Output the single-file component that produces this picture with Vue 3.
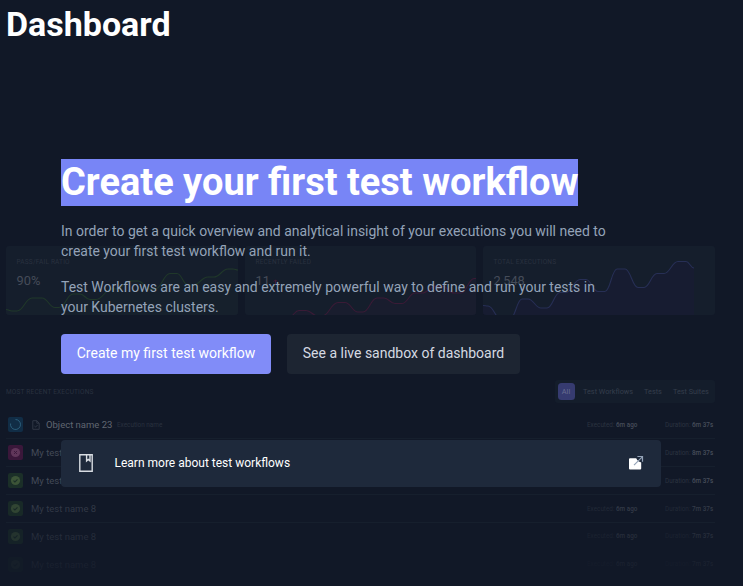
<script setup>
// Smooth curve with horizontal tangents at each point
function curve(points) {
  let d = `M${points[0][0]} ${points[0][1]}`
  for (let i = 1; i < points.length; i++) {
    const [x0, y0] = points[i - 1]
    const [x1, y1] = points[i]
    const k = (x1 - x0) * 0.44
    d += `C${x0 + k} ${y0} ${x1 - k} ${y1} ${x1} ${y1}`
  }
  return d
}
function area(points) {
  return `${curve(points)}V80H${points[0][0]}Z`
}

const cards = [
  {
    title: 'PASS/FAIL RATIO', value: '90%', tone: 'green',
    points: [[0, 63.5], [6, 65], [11, 65], [26, 52], [36, 52], [49, 61.5], [53, 61.5], [67, 48], [74, 48], [84, 53.5], [90, 53.5], [106, 43], [111, 43], [124, 35], [132, 35], [144, 43], [149, 43], [164, 27.5], [171, 27.5], [182, 39], [187, 39], [202, 31], [208, 31], [222, 23], [227, 23], [232, 24]],
  },
  {
    title: 'RECENTLY FAILED', value: '11', tone: 'red', arrow: true,
    points: [[44, 71], [54, 64.5], [61, 64.5], [73, 70], [77, 70], [93, 56.5], [100, 56.5], [113, 66], [118, 66], [132, 52], [139, 52], [150, 57.5], [157, 57.5], [170, 47], [177, 47], [191, 40], [197, 40], [209, 47], [216, 47], [229, 32.5], [232, 32.5]],
  },
  {
    title: 'TOTAL EXECUTIONS', value: '2,548', tone: 'blue',
    points: [[0, 59.5], [5, 60], [18, 73], [27, 73], [39, 53], [45, 53], [58, 62], [64, 62], [77, 46.5], [83, 46.5], [97, 33.5], [103, 33.5], [115, 45.5], [122, 45.5], [134, 23], [142, 23], [155, 41.5], [161, 41.5], [174, 27.5], [181, 27.5], [195, 15.5], [203, 15.5], [211, 22]],
  },
]

const rows = [
  { status: 'running', name: 'Object name 23', note: 'Execution name', duration: '6m 37s' },
  { status: 'failed', name: 'My test name 8', duration: '8m 37s' },
  { status: 'passed', name: 'My test name 8', duration: '6m 37s' },
  { status: 'passed', name: 'My test name 8', duration: '7m 37s' },
  { status: 'passed', name: 'My test name 8', duration: '7m 37s' },
  { status: 'passed', name: 'My test name 8', duration: '7m 37s' },
]
const filters = ['All', 'Test Workflows', 'Tests', 'Test Suites']
</script>

<template>
  <main class="page">
    <h1 class="title">Dashboard</h1>

    <div class="stage">
      <div class="preview" aria-hidden="true">
        <div class="cards">
          <section v-for="card in cards" :key="card.title" class="card" :class="card.tone">
            <svg class="chart" viewBox="0 0 232 69" preserveAspectRatio="none">
              <path class="area" :d="area(card.points)" />
              <path class="line" :d="curve(card.points)" />
            </svg>
            <div class="card-text">
              <div class="label">{{ card.title }}</div>
              <div class="value">
                {{ card.value }}
                <svg v-if="card.arrow" class="up" viewBox="0 0 6 7"><path d="M3 7V1M.7 3.2 3 .9l2.3 2.3" /></svg>
              </div>
            </div>
          </section>
        </div>

        <div class="list-head">
          <span class="label">MOST RECENT EXECUTIONS</span>
          <div class="filters">
            <span v-for="(f, i) in filters" :key="f" class="filter" :class="{ active: i === 0 }">{{ f }}</span>
          </div>
        </div>

        <div class="rows">
          <div v-for="(row, i) in rows" :key="i" class="row" :class="`row-${i}`">
            <span class="status" :class="row.status">
              <svg v-if="row.status === 'running'" viewBox="0 0 15 15"><path class="ring" d="M7.5 2.5a5 5 0 1 1-4.9 4" /></svg>
              <svg v-else viewBox="0 0 15 15">
                <circle cx="7.5" cy="7.5" r="4.6" />
                <path v-if="row.status === 'failed'" d="m6 6 3 3m0-3L6 9" />
                <path v-else d="m5.5 7.6 1.4 1.3 2.6-2.6" />
              </svg>
            </span>
            <svg v-if="row.note" class="doc" viewBox="0 0 8 10">
              <path d="M.8.7h4l2.4 2.5v6.1H.8ZM4.8.7v2.5h2.4M2.4 6l1.1 1.1L5.6 5" />
            </svg>
            <span class="name">{{ row.name }}</span>
            <span v-if="row.note" class="note">{{ row.note }}</span>
            <span class="meta executed">Executed: <b>6m ago</b></span>
            <span class="meta duration">Duration: <b>{{ row.duration }}</b></span>
          </div>
        </div>
      </div>

      <section class="intro">
        <h2><span class="marked">Create your first test workflow</span></h2>
        <p>In order to get a quick overview and analytical insight of your executions you will need to<br />create your first test workflow and run it.</p>
        <p>Test Workflows are an easy and extremely powerful way to define and run your tests in<br />your Kubernetes clusters.</p>
        <div class="actions">
          <button class="btn primary">Create my first test workflow</button>
          <button class="btn secondary">See a live sandbox of dashboard</button>
        </div>
        <a class="learn">
          <svg class="book" viewBox="0 0 16 20">
            <path d="M1.8 1.8h12.4v16.4H1.8Z" />
            <path d="M8.6 2v5.9l1.7-1.4L12 7.9V2" />
          </svg>
          <span>Learn more about test workflows</span>
          <svg class="external" viewBox="0 0 16 16">
            <path class="sheet" d="M1 4.2q0-1 1-1h6.2l1 1.7 1.7 1.6 2.3 1v6q0 1-1 1H2q-1 0-1-1Z" />
            <path class="arrow" d="M6 10.2 14.3 1.9M9.4 1.5h5.1v5.3" />
          </svg>
        </a>
      </section>
    </div>
  </main>
</template>

<style>
body { background: #111827; }
</style>

<style scoped>
.page {
  box-sizing: border-box;
  width: 743px;
  height: 586px;
  overflow: hidden;
  background: #111827;
  color: #fff;
  font-family: Roboto, sans-serif;
}
.title {
  margin: 0;
  padding: 4px 0 0 6px;
  height: 155px;
  box-sizing: border-box;
  font-size: 34px;
  line-height: 41px;
  font-weight: 700;
}
.stage { display: grid; }
.preview, .intro { grid-area: 1 / 1; }
.preview { width: 709px; padding: 91px 0 0 6px; }
.cards { display: grid; grid-template-columns: 232px 231px 232px; column-gap: 7px; }
.card { display: grid; height: 69px; background: #151e2c; border-radius: 3px; overflow: hidden; }
.chart, .card-text { grid-area: 1 / 1; }
.chart { width: 232px; height: 69px; }
.line { fill: none; stroke-width: 1.1; }
.green .line { stroke: #20382a; }
.green .area { fill: #16202c; }
.red .line { stroke: #3a1b36; }
.red .area { fill: #191d2e; }
.blue .line { stroke: #272f55; }
.blue .area { fill: #171c31; }
.label { color: #29313f; font-size: 6.5px; line-height: 8px; letter-spacing: .19px; }
.card-text { padding: 12px 0 0 10.5px; }
.value { margin-top: 7px; color: #454c59; font-size: 12.8px; line-height: 15px; }
.up { width: 5px; height: 6px; fill: none; stroke: #4a1c3b; }
.list-head { display: flex; justify-content: space-between; align-items: center; margin-top: 65px; height: 23px; }
.filters { display: flex; align-items: center; box-sizing: border-box; width: 160px; height: 23px; padding-left: 2.5px; background: #141d2b; border-radius: 3px; color: #353d4b; font-size: 7.3px; }
.filter { flex: none; margin-right: 11px; white-space: nowrap; }
.filter.active { box-sizing: border-box; width: 17px; margin-right: 8.5px; line-height: 17px; text-align: center; border-radius: 3.5px; background: #363b70; color: #696e91; }
.rows { margin-top: 8.2px; }
.row { display: flex; align-items: center; height: 27.9px; box-sizing: border-box; border-bottom: 1px solid #161f2d; padding: 0 2px; color: #434a57; font-size: 9.5px; }
.status { width: 15px; height: 15px; border-radius: 2px; margin-right: 8px; }
.status svg { display: block; width: 15px; height: 15px; fill: none; stroke-width: .9; }
.running { background: #112d46; }
.running svg { stroke: #2f6380; }
.failed { background: #3a173a; }
.failed svg { stroke: #3a173a; }
.failed circle { fill: #60365a; stroke: none; }
.passed { background: #1b2f28; }
.passed svg { stroke: #1b2f28; stroke-width: 1.1; }
.passed circle { fill: #3c5437; stroke: none; }
.doc { width: 8px; height: 10px; margin: 1px 6px 0 1px; fill: none; stroke: #39404e; stroke-width: .8; }
.name { white-space: nowrap; padding-top: .6px; }
.row-0 .name { color: #606671; }
.note { margin-left: 4.5px; font-size: 6.4px; color: #29313f; }
.meta { width: 50.5px; white-space: nowrap; font-size: 6.35px; color: #2b3340; padding-top: .6px; }
.meta b { font-weight: 500; color: #474e5b; }
.executed { margin-left: auto; }
.duration { width: 48.5px; margin-left: 27.5px; margin-right: -.5px; }
.row-3 .status { opacity: .75; }
.row-3 .name, .row-3 .meta { opacity: .65; }
.row-4 .status { opacity: .45; }
.row-4 .name, .row-4 .meta { opacity: .4; }
.row-5 .status { opacity: .13; }
.row-5 .name, .row-5 .meta { opacity: .17; }
.row-4, .row-5 { border-color: transparent; }

.intro { z-index: 1; width: 600px; padding: 4px 0 0 61px; }
h2 { margin: 0 0 15px; height: 47px; font-size: 38px; line-height: 46px; font-weight: 700; white-space: nowrap; }
.marked { display: inline-block; height: 47px; background: #7885f6; }
p { margin: 0 0 16px; color: #94a3b8; font-size: 13.98px; line-height: 20px; white-space: nowrap; }
.actions { display: flex; gap: 16px; margin-top: 17px; }
.btn { display: flex; justify-content: center; height: 40px; padding: 0; border: 0; border-radius: 4px; font: 400 14px/38px Roboto, sans-serif; white-space: nowrap; }
.btn { align-items: flex-start; }
.primary { width: 210px; background: #818cf8; color: #fff; }
.secondary { width: 233px; background: #1d2532; color: #d5dae2; }
.learn { display: flex; align-items: center; box-sizing: border-box; width: 600px; height: 47px; margin-top: 66px; padding: 0 17px 2px; border-radius: 4px; background: #1e293b; font-size: 12px; }
.book { width: 16px; height: 20px; margin-right: 20.5px; fill: none; stroke: #d8dce2; stroke-width: 1.4; }
.external { width: 16px; height: 16px; margin-left: auto; }
.sheet { fill: #fff; }
.arrow { fill: none; stroke: #94a3b8; stroke-width: 1.2; }
</style>
